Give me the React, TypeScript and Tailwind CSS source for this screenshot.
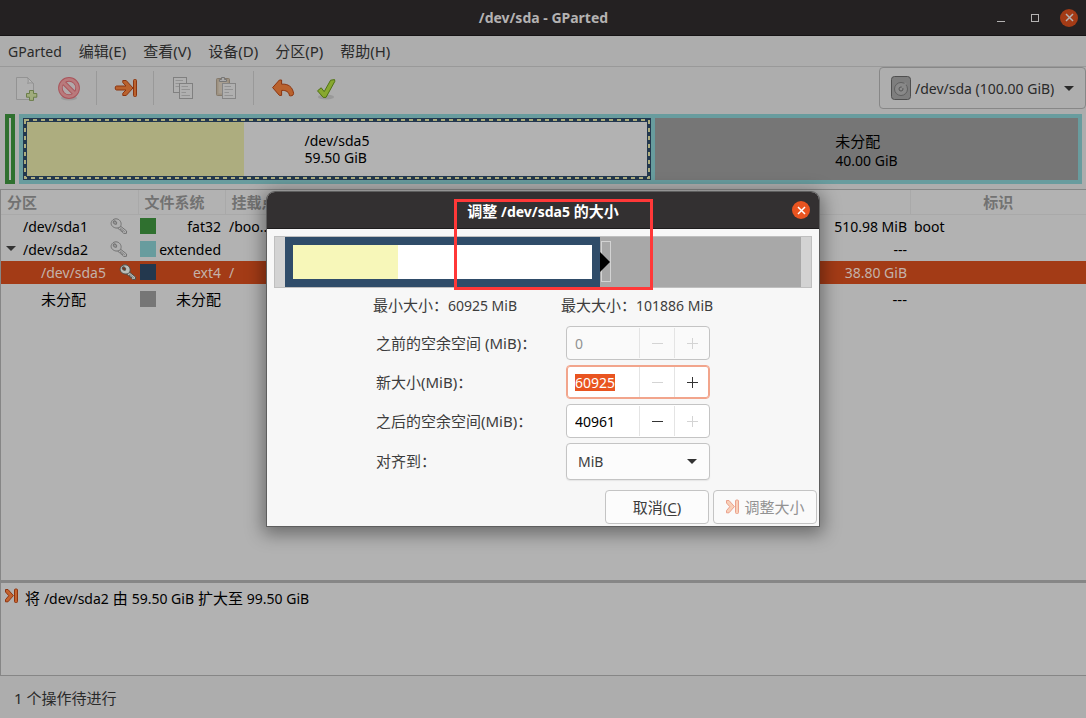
import React, { useState } from 'react';

interface Partition {
  name: string;
  indent: string;
  expandable?: boolean;
  locked?: boolean;
  color: string;
  fs: string;
  mount: string;
  unused: string;
  flags: string;
  selected?: boolean;
}

const partitions: Partition[] = [
  { name: '/dev/sda1', indent: 'pl-[22px]', locked: true, color: 'bg-[#2f702f]', fs: 'fat32', mount: '/boo...', unused: '510.98 MiB', flags: 'boot' },
  { name: '/dev/sda2', indent: 'pl-[5px]', expandable: true, locked: true, color: 'bg-[#689c9e]', fs: 'extended', mount: '', unused: '---', flags: '' },
  { name: '/dev/sda5', indent: 'pl-10', locked: true, color: 'bg-[#23384e]', fs: 'ext4', mount: '/', unused: '38.80 GiB', flags: '', selected: true },
  { name: '未分配', indent: 'pl-10', color: 'bg-[#767676]', fs: '未分配', mount: '', unused: '---', flags: '' },
];

const menus = ['GParted', '编辑(E)', '查看(V)', '设备(D)', '分区(P)', '帮助(H)'];

function KeyIcon({ bright }: { bright?: boolean }) {
  return (
    <svg width="18" height="17" viewBox="0 0 18 17" className="shrink-0">
      <g fill={bright ? '#b9bdb9' : '#b0b0b0'} stroke={bright ? '#4c504c' : '#737373'} strokeWidth="1" strokeLinejoin="round">
        <path d="M9.6 7.4 L16.6 13 L16.4 15.4 L13.6 15.4 L12.6 14.4 L12.6 13.2 L11 13.2 L11 11.8 L9.4 11.6 L7.6 10 Z" />
        <path d="M2.2 2.6 C4 .2 8 .2 10 2.8 C11.8 5 11.4 8.4 9.2 9.6 C6.4 10.8 2.6 9.6 1.4 6.8 C.8 5.2 1.2 3.8 2.2 2.6 Z" />
        <ellipse cx="5" cy="4.6" rx="1.9" ry="1.4" transform="rotate(40 5 4.6)" fill={bright ? '#7f3014' : '#999'} />
      </g>
      <path d="M9.4 9.2 L14.8 13.8" stroke="#858585" />
    </svg>
  );
}

function ResizeIcon({ faded }: { faded?: boolean }) {
  return (
    <svg width="15" height="16" viewBox="0 0 15 16" className={faded ? 'opacity-50' : ''}>
      <g
        fill={faded ? '#f9a878' : '#c4632f'}
        stroke={faded ? '#dc4a22' : '#8f3511'}
        strokeWidth="1"
        strokeLinejoin="round"
      >
        <path d="M1.5 1.5 H4 L9.4 7.6 L4 13.8 H1.5 V11.6 L4.8 7.7 L1.5 4 Z" />
        <rect x="10.5" y="1" width="3" height="13.5" rx="1" />
      </g>
    </svg>
  );
}

function CloseIcon() {
  return (
    <svg width="9" height="9" viewBox="0 0 9 9">
      <path d="M1 1 L8 8 M8 1 L1 8" stroke="currentColor" strokeWidth="1.5" />
    </svg>
  );
}

function ToolButton({ label, children }: { label: string; children: React.ReactNode }) {
  return (
    <button aria-label={label} className="flex h-[42px] w-[43px] items-center justify-center">
      <svg width="24" height="26" viewBox="0 0 24 26">{children}</svg>
    </button>
  );
}

function Separator() {
  return <div className="mr-[7px] ml-1.5 h-[34px] w-px bg-[#999]" />;
}

function Toolbar() {
  return (
    <div className="flex h-[42px] items-center pl-1">
      <ToolButton label="新建">
        <path d="M2.5 2.5 H13.5 L19.5 8.5 V24.5 H2.5 Z" fill="#b0b0b0" stroke="#939393" />
        <path d="M13.5 2.5 C14.6 5 14.4 7 13.6 8.4 C15.6 7.6 17.8 7.6 19.5 8.5 Z" fill="#b8b8b8" stroke="#939393" />
        <path d="M15.5 15.5 H19.5 V18.5 H22.8 V22.2 H19.5 V25.4 H15.5 V22.2 H12.5 V18.5 H15.5 Z" fill="#a0ac7c" stroke="#6b7e4a" />
      </ToolButton>
      <ToolButton label="删除">
        <ellipse cx="12" cy="23" rx="8" ry="2.5" fill="#9b9b9b" />
        <circle cx="12" cy="13" r="8.6" fill="#b1a9aa" stroke="#a9545b" strokeWidth="4.6" />
        <path d="M6 7 L18 19" stroke="#a9545b" strokeWidth="4.6" />
        <circle cx="12" cy="13" r="8.6" fill="none" stroke="#b97a7c" strokeWidth="2.8" />
        <path d="M6 7 L18 19" stroke="#b97a7c" strokeWidth="2.8" />
      </ToolButton>
      <Separator />
      <ToolButton label="调整大小/移动">
        <g fill="#b9622e" stroke="#8c340f" strokeLinejoin="round">
          <rect x="19.5" y="4.5" width="3" height="17" rx="1" />
          <path d="M2.5 11 H12 L8.8 7.6 V5.5 H12.2 L19 13 L12.2 20.5 H8.8 V18.2 L12 15 H2.5 Q1.2 15 1.2 13 Q1.2 11 2.5 11 Z" />
        </g>
      </ToolButton>
      <Separator />
      <ToolButton label="复制">
        <g fill="#b0b0b0" stroke="#808080">
          <rect x="2.5" y="2.5" width="13" height="15" />
          <rect x="8.5" y="8.5" width="13" height="15" />
        </g>
        <path d="M4.5 5.5 H12 M4.5 8.5 H8 M4.5 11.5 H8 M10.5 11.5 H17 M10.5 14.5 H19 M10.5 17.5 H15 M10.5 20.5 H19" stroke="#939393" />
      </ToolButton>
      <ToolButton label="粘贴">
        <rect x="2.5" y="3.5" width="13" height="17" rx="1" fill="#9d9180" stroke="#857a6c" />
        <rect x="4.5" y="6.5" width="9" height="12" fill="#a89f92" />
        <path d="M5.5 6.5 V4.5 H7.5 V2.5 H10.5 V4.5 H12.5 V6.5 Z" fill="#aaa" stroke="#777" />
        <rect x="8.5" y="8.5" width="13" height="15" fill="#b0b0b0" stroke="#858585" />
        <path d="M10.5 11.5 H17 M10.5 14.5 H19 M10.5 17.5 H15 M10.5 20.5 H19" stroke="#939393" />
      </ToolButton>
      <Separator />
      <ToolButton label="撤消">
        <path
          d="M10.6 5 V9.2 C17.4 8.6 21.6 12 22.6 18.4 C22.6 20.8 19.6 21.2 18.4 20.6 C18 17 15.4 15.2 10.6 15.4 V20.4 H8.4 L1.6 12.6 L8.4 5 Z"
          fill="#b9622e"
          stroke="#8c340f"
          strokeLinejoin="round"
        />
      </ToolButton>
      <ToolButton label="应用">
        <ellipse cx="12" cy="22" rx="8" ry="2.5" fill="#999" />
        <path
          d="M3.5 15.8 L7.2 12.8 L10.2 16.6 L16.6 5.2 L20.6 4.6 L20.8 6.4 L12 22.4 H9.2 Z"
          fill="#88a82f"
          stroke="#4f7213"
          strokeLinejoin="round"
        />
      </ToolButton>

      <div className="relative ml-auto">
        <svg width="20" height="24" viewBox="0 0 20 24" className="pointer-events-none absolute top-[9px] left-3">
          <rect x=".5" y=".5" width="19" height="23" rx="3" fill="#7e7e7e" stroke="#4f4f4f" />
          <circle cx="10" cy="13" r="6.5" fill="#898989" stroke="#5f5f5f" />
          <circle cx="10" cy="13" r="2" fill="#8d8d8d" stroke="#555" />
          <path d="M11 12 L15 7" stroke="#898989" strokeWidth="2" />
        </svg>
        <select
          aria-label="设备"
          className="block h-[42px] w-[207px] appearance-none rounded border border-[#878787] bg-[#aeaeae] pl-[35px] text-[14px] text-[#2a2a2a]"
        >
          <option>/dev/sda (100.00 GiB)</option>
        </select>
        <svg width="10" height="6" viewBox="0 0 10 6" className="pointer-events-none absolute top-[19px] right-3">
          <path d="M0 0 H10 L5 5 Z" fill="#2a2a2a" />
        </svg>
      </div>
    </div>
  );
}

function DiskVisual() {
  return (
    <div className="mt-[5px] flex h-[70px] gap-1 pr-1 pl-[5px] text-[14px] leading-[17px] text-black">
      <div className="w-[10px] border-4 border-[#2f702f] bg-[#b2b2b2]" />
      <div className="flex flex-1 gap-1 bg-[#689c9e] p-1">
        <div className="relative flex grow-[620] basis-0 bg-[#23384e] p-1">
          <svg className="absolute inset-0 h-full w-full">
            <rect
              x="2"
              y="2"
              className="h-[calc(100%-4px)] w-[calc(100%-4px)]"
              fill="none"
              stroke="#adad7f"
              strokeWidth="2"
              strokeDasharray="4 4"
            />
          </svg>
          <div className="w-[35%] bg-[#adad7f]" />
          <div className="flex-1 bg-[#b2b2b2]" />
          <div className="absolute inset-0 flex items-center justify-center">
            <p>/dev/sda5<br />59.50 GiB</p>
          </div>
        </div>
        <div className="flex grow-[423] basis-0 items-center justify-center bg-[#767676] pt-[3px]">
          <div>
            <p className="text-[15px] leading-[19px]">未分配</p>
            <p className="leading-[19px]">40.00 GiB</p>
          </div>
        </div>
      </div>
    </div>
  );
}

function PartitionTable() {
  return (
    <div className="mt-[5px] flex-1 border-t border-l border-[#868686] bg-[#b2b2b2]">
      <table className="w-full table-fixed border-collapse text-[14px] text-black">
        <thead className="text-[15px] text-[#727272]">
          <tr className="h-6 border-b border-[#a9a9a9]">
            <th className="w-[137px] border-r border-[#a9a9a9] p-0 pl-1.5 text-left leading-5">分区</th>
            <th className="w-[87px] border-r border-[#a9a9a9] p-0 pl-1.5 text-left leading-5">文件系统</th>
            <th className="border-r border-[#a9a9a9] p-0 pl-1.5 text-left leading-5">挂载点</th>
            <th className="w-[213px] border-r border-[#a9a9a9] p-0" />
            <th className="w-[176px] p-0 leading-5">标识</th>
          </tr>
        </thead>
        <tbody>
          {partitions.map((p, i) => (
            <tr
              key={i}
              className={`leading-[23px] ${p.selected ? 'bg-[#a33b16] text-[#c4b2aa]' : ''} ${p.locked ? 'h-[23px]' : 'h-[31px] text-[15px]'}`}
            >
              <td className="p-0">
                <div className={`flex items-center ${p.indent} ${p.selected ? 'pr-px' : 'pr-2.5'}`}>
                  {p.expandable && (
                    <svg width="10" height="6" viewBox="0 0 10 6" className="mr-[7px]">
                      <path d="M0 0 H10 L5 5 Z" fill="#333" />
                    </svg>
                  )}
                  <span className="flex-1">{p.name}</span>
                  {p.locked && <KeyIcon bright={p.selected} />}
                </div>
              </td>
              <td className="p-0">
                <div className="flex items-center justify-between pr-1 pl-0.5">
                  <span className={`h-4 w-4 shrink-0 ${p.color}`} />
                  <span>{p.fs}</span>
                </div>
              </td>
              <td className="p-0 pl-1">{p.mount}</td>
              <td className="p-0 pr-[3px] text-right">{p.unused}</td>
              <td className="p-0 pl-1">{p.flags}</td>
            </tr>
          ))}
        </tbody>
      </table>
    </div>
  );
}

interface SpinProps {
  id: string;
  value: string;
  disabled?: boolean;
  active?: boolean;
  minus?: boolean;
  plus?: boolean;
}

function SpinBox({ id, value, disabled, active, minus, plus }: SpinProps) {
  const [text, setText] = useState(value);

  return (
    <div
      className={`flex h-[34px] overflow-hidden rounded border ${
        active ? 'border-[#f2a58c] bg-white ring-1 ring-[#f2a58c] ring-inset' : disabled ? 'border-[#c4c4c4] bg-[#fafafa]' : 'border-[#c4c4c4] bg-white'
      }`}
    >
      <div className="flex flex-1 items-center pl-2">
        <input
          id={id}
          value={text}
          disabled={disabled}
          autoFocus={active}
          onFocus={(e) => e.target.select()}
          onChange={(e) => setText(e.target.value)}
          className={`h-[17px] w-full text-[14px] leading-[17px] outline-none selection:bg-[#e95420] selection:text-white ${disabled ? 'text-[#929292]' : 'text-black'}`}
        />
      </div>
      <button
        aria-label="减少"
        disabled={!minus}
        className={`my-px flex w-[35px] items-center justify-center border-l border-[#e4e4e4] ${minus ? 'text-[#333]' : 'text-[#d4d4d4]'}`}
      >
        <svg width="11" height="11" viewBox="0 0 11 11"><path d="M0 5.5 H11" stroke="currentColor" /></svg>
      </button>
      <button
        aria-label="增加"
        disabled={!plus}
        className={`my-px flex w-[35px] items-center justify-center border-l border-[#e4e4e4] ${plus ? 'text-[#333]' : 'text-[#d4d4d4]'}`}
      >
        <svg width="11" height="11" viewBox="0 0 11 11"><path d="M0 5.5 H11 M5.5 0 V11" stroke="currentColor" /></svg>
      </button>
    </div>
  );
}

function ResizeDialog() {
  return (
    <div
      role="dialog"
      aria-labelledby="dialog-title"
      className="relative w-[552px] rounded-t-lg bg-[#f7f7f7] text-[15px] text-[#3d3d3d] shadow-[0_0_0_1px_#5e5e5e,0_4px_18px_4px_rgba(0,0,0,0.4)]"
    >
      <div className="flex h-[37px] items-center rounded-t-lg border-b border-[#1e1c1d] bg-[#333031] px-[9px] text-white">
        <span className="w-[18px]" />
        <h2 id="dialog-title" className="flex-1 pt-0.5 text-center font-bold">
          调整 <span className="text-[14px]">/dev/sda5</span> 的大小
        </h2>
        <button aria-label="关闭" className="flex h-[18px] w-[18px] items-center justify-center rounded-full bg-[#e95420]">
          <CloseIcon />
        </button>
      </div>

      <div className="px-[7px] pt-[7px]">
        <div className="flex h-[52px] border border-[#bfbfbf] bg-[#d3d3d3] px-[10px]">
          <div className="flex grow-[299] basis-0 border-8 border-[#2f4c69] bg-white">
            <div className="w-[35%] bg-[#f7f7b9]" />
          </div>
          <div className="flex grow-[201] basis-0 items-center bg-[#a8a8a8]">
            <svg width="11" height="42" viewBox="0 0 11 42">
              <rect x="1.5" y=".5" width="9" height="40" fill="none" stroke="#d3d3d3" />
              <path d="M0 11 L10 21 L0 31 Z" fill="#000" />
            </svg>
          </div>
        </div>
      </div>

      <div className="flex h-[38px] items-center justify-center gap-11 pb-[3px]">
        <p>最小大小：<span className="text-[14px]">60925 MiB</span></p>
        <p>最大大小：<span className="text-[14px]">101886 MiB</span></p>
      </div>

      <div className="mx-auto grid w-[334px] grid-cols-[190px_144px] items-center gap-y-[5px]">
        <label htmlFor="before">之前的空余空间 (MiB)：</label>
        <SpinBox id="before" value="0" disabled />
        <label htmlFor="size">新大小(MiB)：</label>
        <SpinBox id="size" value="60925" active plus />
        <label htmlFor="after">之后的空余空间(MiB)：</label>
        <SpinBox id="after" value="40961" minus />
        <label htmlFor="align">对齐到：</label>
        <div className="relative">
          <select
            id="align"
            className="block h-[37px] w-full appearance-none rounded border border-[#c4c4c4] bg-[#fcfcfc] pl-[11px] text-[14px] shadow-[0_1px_1px_#e6e6e6]"
          >
            <option>MiB</option>
          </select>
          <svg width="10" height="6" viewBox="0 0 10 6" className="pointer-events-none absolute top-4 right-[13px]">
            <path d="M0 0 H10 L5 5 Z" fill="#333" />
          </svg>
        </div>
      </div>

      <div className="flex justify-end gap-1 pt-[10px] pr-0.5 pb-0.5">
        <button className="h-[34px] w-[104px] rounded border border-[#c4c4c4] bg-[#fcfcfc]">
          取消(<span className="underline underline-offset-2">C</span>)
        </button>
        <button disabled className="flex h-[34px] w-[104px] items-center justify-center gap-1 rounded border border-[#c4c4c4] bg-[#fafafa] text-[#929292]">
          <ResizeIcon faded />
          调整大小
        </button>
      </div>

      {/* highlight frame */}
      <div className="pointer-events-none absolute top-[7px] left-[187px] h-[91px] w-[199px] border-3 border-[#ff3838]" />
    </div>
  );
}

export default function App() {
  return (
    <div className="relative flex min-h-screen flex-col overflow-hidden bg-[#adadad] font-['Noto_Sans','Noto_Sans_CJK_SC',sans-serif]">
      <header className="flex h-9 items-center border-b border-[#161415] bg-[#242122] pr-2 text-[#b4b2b2]">
        <span className="w-[90px]" />
        <h1 className="flex-1 text-center text-[14px] font-bold">/dev/sda - GParted</h1>
        <div className="flex items-center gap-[26px]">
          <button aria-label="最小化" className="flex h-[9px] w-2 items-end border-b border-current" />
          <button aria-label="最大化" className="h-2 w-2 border border-current" />
          <button aria-label="关闭" className="-ml-[5px] flex h-[18px] w-[18px] items-center justify-center rounded-full bg-[#a33b16]">
            <CloseIcon />
          </button>
        </div>
      </header>

      <nav className="flex h-[31px] items-center gap-[17px] border-b border-[#999] pl-2 text-[15px] text-[#2a2a2a]">
        {menus.map((menu) => (
          <button key={menu} className={menu === 'GParted' ? 'text-[14px]' : ''}>{menu}</button>
        ))}
      </nav>

      <Toolbar />
      <DiskVisual />
      <PartitionTable />

      <div className="flex h-24 items-start gap-1.5 border-t-3 border-b border-l border-[#868686] bg-[#b2b2b2] pt-[5px] pl-[3px] text-[15px] text-black">
        <ResizeIcon />
        <p className="leading-[21px]">
          将 <span className="text-[14px]">/dev/sda2</span> 由 <span className="text-[14px]">59.50 GiB</span> 扩大至{' '}
          <span className="text-[14px]">99.50 GiB</span>
        </p>
      </div>
      <footer className="flex h-[42px] items-center pt-0.5 pl-3.5 text-[15px] text-[#2a2a2a]">1 个操作待进行</footer>

      <div className="absolute inset-0 flex items-center justify-center">
        <ResizeDialog />
      </div>
    </div>
  );
}
